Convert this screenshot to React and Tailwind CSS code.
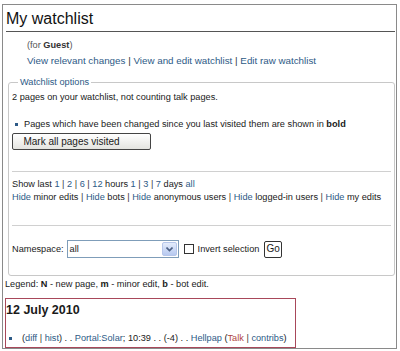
import React from "react";

const link = "text-[#2d5a86]";

const Sep = () => <span className="text-[#333]"> | </span>;

export default function App() {
  return (
    <div className="w-[400px] h-[351px] bg-white pt-[4px] pl-[2px] font-['Liberation_Sans',Arial,sans-serif] text-[9.2px] text-[#1a1a1a] leading-[12px]">
      <div className="w-[395px] h-[345px] border border-[#8a8a8a]">
        {/* title */}
        <div className="ml-[3px] mr-[1px] pt-[5px] pb-[3px] border-b border-[#555]">
          <h1 className="text-[16px] leading-[18px] text-[#111]">My watchlist</h1>
        </div>

        <div className="pl-[24px] mt-[6px] leading-[15px] text-[#555]">
          (for <b className="text-[#333]">Guest</b>)
        </div>
        <div className={`pl-[24px] leading-[15px] text-[9.8px] ${link}`}>
          View relevant changes<Sep />View and edit watchlist<Sep />Edit raw watchlist
        </div>

        {/* watchlist options */}
        <fieldset className="ml-[5px] mt-[8px] w-[387px] border border-[#c8c8c8] rounded-[3px] pl-[3px] pr-[3px] pb-[17px]">
          <legend className={`px-[2px] ml-[6px] leading-[12px] ${link}`}>Watchlist options</legend>
          <div className="pt-[3px]">2 pages on your watchlist, not counting talk pages.</div>

          <div className="flex items-center mt-[15px] pl-[3px]">
            <span className="w-[3px] h-[3px] bg-[#2d5a86] mr-[6px]" />
            <span>
              Pages which have been changed since you last visited them are shown in <b>bold</b>
            </span>
          </div>
          <button className="mt-[3px] block w-[139px] h-[17px] border border-[#444] rounded-[2px] bg-gradient-to-b from-white to-[#e4e4e0] text-[10px] leading-none pr-[20px]">
            Mark all pages visited
          </button>

          <div className="mt-[21px] border-t border-[#d0d0d0]" />

          <div className="mt-[6px]">
            Show last <span className={link}>1</span><Sep /><span className={link}>2</span><Sep />
            <span className={link}>6</span><Sep /><span className={link}>12</span> hours{" "}
            <span className={link}>1</span><Sep /><span className={link}>3</span><Sep />
            <span className={link}>7</span> days <span className={link}>all</span>
          </div>
          <div className="mt-[1px] whitespace-nowrap">
            <span className={link}>Hide</span> minor edits<Sep />
            <span className={link}>Hide</span> bots<Sep />
            <span className={link}>Hide</span> anonymous users<Sep />
            <span className={link}>Hide</span> logged-in users<Sep />
            <span className={link}>Hide</span> my edits
          </div>

          <div className="mt-[22px] border-t border-[#d0d0d0]" />

          <div className="flex items-center mt-[14px] h-[18px]">
            <span className="mr-[3px]">Namespace:</span>
            <div className="w-[112px] h-[18px] border border-[#7f9db9] flex items-center justify-between">
              <span className="pl-[2px]">all</span>
              <span className="w-[15px] h-[14px] mr-[1px] rounded-[2px] bg-gradient-to-b from-[#e4ecfb] to-[#b7c9f0] border border-[#b6c6ea] flex items-center justify-center">
                <svg width="7" height="5" viewBox="0 0 7 5">
                  <path d="M0.5 0.5 L3.5 3.5 L6.5 0.5" fill="none" stroke="#4d6185" strokeWidth="1.6" />
                </svg>
              </span>
            </div>
            <span className="ml-[5px] w-[10px] h-[10px] border border-[#333] bg-white" />
            <span className="ml-[4px]">Invert selection</span>
            <span className="ml-[5px] px-[1px] h-[17px] border border-[#333] rounded-[2px] flex items-center text-[10px] bg-white">Go</span>
          </div>
        </fieldset>

        <div className="pl-[2px] mt-[2px]">
          Legend: <b>N</b> - new page, <b>m</b> - minor edit, <b>b</b> - bot edit.
        </div>

        {/* day block */}
        <div className="ml-[2px] mt-[8px] w-[291px] h-[50px] border border-[#a8485a]">
          <div className="pt-[4px] text-[12.5px] font-bold leading-[14px]">12 July 2010</div>
          <div className="flex items-center pl-[3px] mt-[15px] whitespace-nowrap">
            <span className="w-[3px] h-[3px] bg-[#2d5a86] mr-[10px]" />
            <span>
              (<span className={link}>diff</span><Sep /><span className={link}>hist</span>) . .{" "}
              <span className={link}>Portal:Solar</span>; 10:39 . . (-4) . .{" "}
              <span className={link}>Hellpap</span> (<span className="text-[#b0443d]">Talk</span><Sep />
              <span className={link}>contribs</span>)
            </span>
          </div>
        </div>
      </div>
    </div>
  );
}
